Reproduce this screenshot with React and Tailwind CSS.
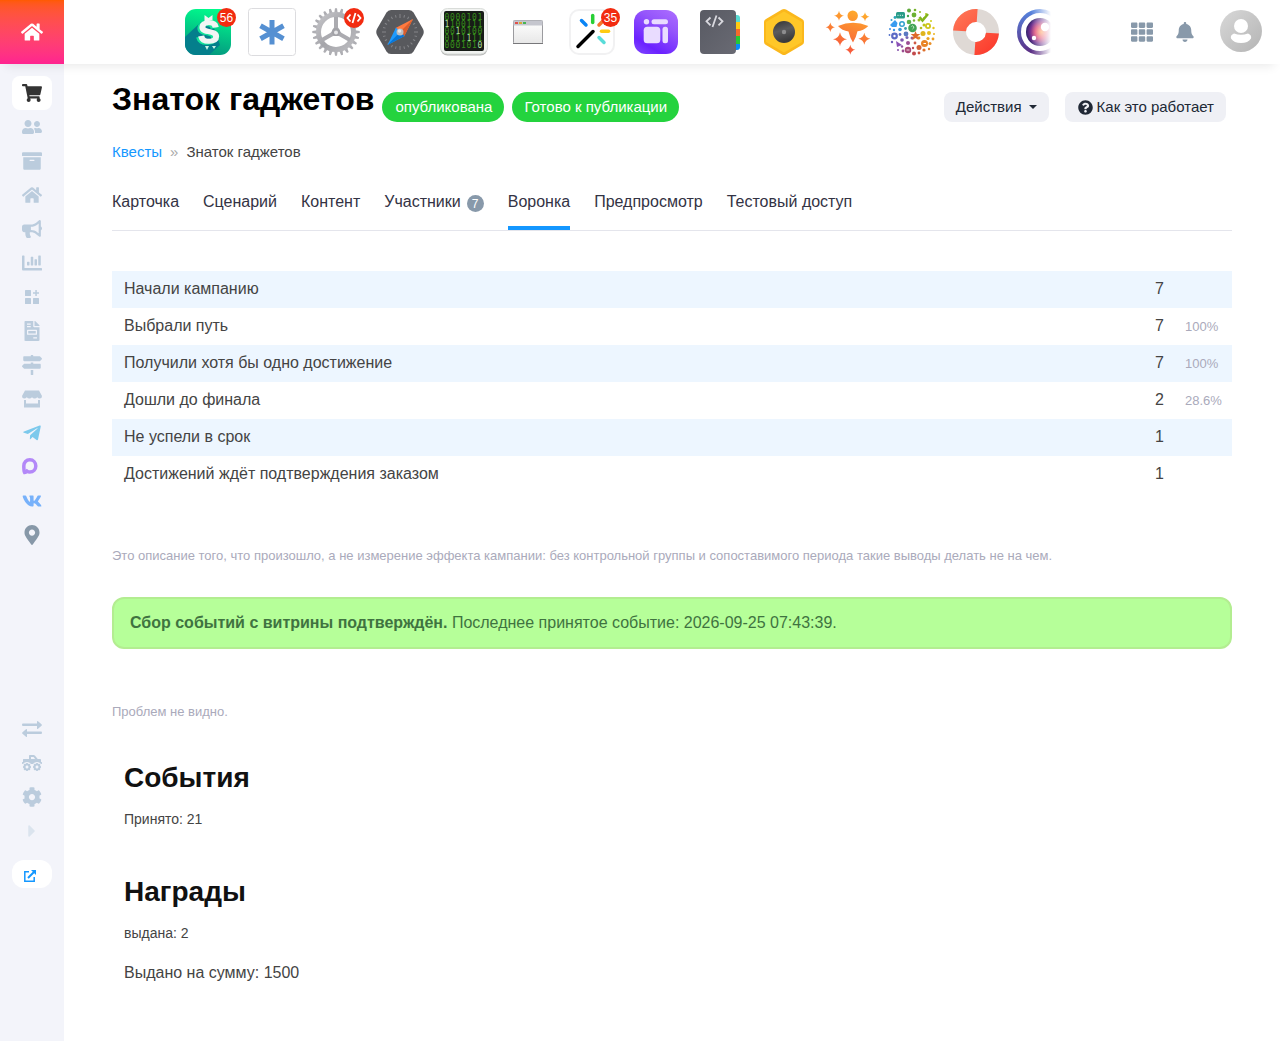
import {
  FaArchive,
  FaBell,
  FaBullhorn,
  FaCaretRight,
  FaChartBar,
  FaCog,
  FaFileInvoice,
  FaHome,
  FaMapMarkerAlt,
  FaMapSigns,
  FaQuestionCircle,
  FaShoppingCart,
  FaTelegramPlane,
  FaTh,
  FaTruckMonster,
  FaUserFriends,
  FaVk,
} from "react-icons/fa";

const FUNNEL = [
  { label: "Начали кампанию", value: 7, percent: "" },
  { label: "Выбрали путь", value: 7, percent: "100%" },
  { label: "Получили хотя бы одно достижение", value: 7, percent: "100%" },
  { label: "Дошли до финала", value: 2, percent: "28.6%" },
  { label: "Не успели в срок", value: 1, percent: "" },
  { label: "Достижений ждёт подтверждения заказом", value: 1, percent: "" },
];

const TABS = [
  { label: "Карточка" },
  { label: "Сценарий" },
  { label: "Контент" },
  { label: "Участники", count: 7 },
  { label: "Воронка", active: true },
  { label: "Предпросмотр" },
  { label: "Тестовый доступ" },
];

/* ---------- app icons, 48x48 ---------- */

function MoneyIcon() {
  return (
    <svg viewBox="0 0 48 48" className="size-12">
      <defs>
        <linearGradient id="money" x1="0.8" y1="0" x2="0.6" y2="1">
          <stop offset="0" stopColor="#00ff8c" />
          <stop offset="1" stopColor="#049a80" />
        </linearGradient>
        <clipPath id="moneyClip"><rect x="1" y="1" width="46" height="46" rx="11" /></clipPath>
      </defs>
      <g clipPath="url(#moneyClip)">
        <rect x="1" y="1" width="46" height="46" fill="url(#money)" />
        <path d="M17 14 1 29V47H25L36 37 30 20Z" fill="#047f8c" />
        <text
          x="25"
          y="35"
          fill="#f2f5f4"
          stroke="#f2f5f4"
          strokeWidth="1.500"
          fontFamily="Liberation Sans, sans-serif"
          fontWeight="700"
          fontSize="32"
          textAnchor="middle"
          className="drop-shadow-[-2px_1px_0_#14e59a]"
        >
          S
        </text>
        <path d="M20.500 14V7l4 3 4-3v5" fill="#f2f5f4" />
        <path d="M21 38h4l-2 4ZM28 38h4l-2 3Z" fill="#c9f5e6" />
      </g>
    </svg>
  );
}

function AsteriskIcon() {
  return (
    <svg viewBox="0 0 48 48" className="size-12">
      <rect x="0.5" y="0.5" width="47" height="47" rx="3" fill="#fff" stroke="#dcdcdf" />
      <path d="M24 12v24.500M12.500 17.700l23 13M35.500 17.700l-23 13" stroke="#5590d2" strokeWidth="5" />
    </svg>
  );
}

function GearIcon() {
  const teeth = Array.from({ length: 24 }, (_, i) => i * 15);
  return (
    <svg viewBox="0 0 48 48" className="size-12">
      <defs>
        <linearGradient id="gear" x1="0" y1="0" x2="1" y2="1">
          <stop offset="0" stopColor="#c4c4c8" />
          <stop offset="0.5" stopColor="#a5a5aa" />
          <stop offset="1" stopColor="#bcbcc0" />
        </linearGradient>
      </defs>
      {teeth.map((a) => (
        <path key={a} d="M22.300 5 23 0.300h2L25.700 5Z" fill="#aeaeb3" transform={`rotate(${a} 24 24)`} />
      ))}
      <circle cx="24" cy="24" r="17.500" fill="none" stroke="url(#gear)" strokeWidth="5" />
      <path d="M24 24V9M24 24 10 32M24 24l14 8" stroke="#ababb0" strokeWidth="4" />
      <path d="M24 16l7 12H17Z" fill="#ababb0" />
      <circle cx="24" cy="24" r="4" fill="#a2a2a7" />
      <circle cx="24" cy="24.500" r="2" fill="#e6e6e8" />
    </svg>
  );
}

function CompassIcon() {
  const ticks = Array.from({ length: 24 }, (_, i) => i * 15);
  return (
    <svg viewBox="0 0 48 48" className="size-12">
      <path d="M15 2h18q3 0 4.500 2.500L47 21q1.500 3 0 6L37.500 43.500Q36 46 33 46H15q-3 0-4.500-2.500L1 27q-1.500-3 0-6L10.500 4.500Q12 2 15 2Z" fill="#58595d" />
      {ticks.map((a) => (
        <path
          key={a}
          d={a % 90 === 0 ? "M24 6v4" : "M24 6.500v2.500"}
          stroke="#85868a"
          strokeWidth="1"
          transform={`rotate(${a} 24 24)`}
        />
      ))}
      <path d="M37 11 19.500 20l8.500 8.500Z" fill="#ff793e" />
      <path d="M37 11 24 24l4 4.500Z" fill="#d95d2c" />
      <path d="M11.500 37 20 19.500l8.500 8.500Z" fill="#1e9bff" />
      <path d="M11.500 37 24 24l4.500 4Z" fill="#0876d8" />
      <circle cx="24" cy="24" r="3.500" fill="#bdbdc0" />
      <circle cx="23.500" cy="23" r="1.800" fill="#e4e4e4" />
    </svg>
  );
}

function MatrixIcon() {
  const rows = ["0000101", "1100111", "0010100", "0111111", "0001010"];
  return (
    <svg viewBox="0 0 48 48" className="size-12">
      <rect x="0.500" y="1" width="47" height="46.500" rx="7" fill="#b7b8b7" />
      <rect x="0.500" y="0.500" width="47" height="45.500" rx="7" fill="#f1f3f1" stroke="#d9dcd9" />
      <rect x="4" y="3" width="40" height="40" rx="2" fill="#171c17" />
      <g fontFamily="DejaVu Sans Mono, monospace" fontSize="8">
        {rows.map((row, r) =>
          row.split("").map((digit, c) => (
            <text
              key={`${r}-${c}`}
              x={4.5 + c * 5.5}
              y={11.5 + r * 7}
              fill={(r * 5 + c * 3) % 11 === 5 ? "#a9dc9b" : "#37901a"}
            >
              {digit}
            </text>
          ))
        )}
      </g>
    </svg>
  );
}

function WindowIcon() {
  return (
    <svg viewBox="0 0 48 48" className="size-12">
      <defs>
        <linearGradient id="win" x1="0" y1="0" x2="0" y2="1">
          <stop offset="0" stopColor="#fff" />
          <stop offset="1" stopColor="#e7e7e7" />
        </linearGradient>
      </defs>
      <rect x="9.500" y="12.500" width="29" height="23" rx="1" fill="url(#win)" stroke="#9b9b9f" />
      <path d="M9.500 12.500h29v5h-29Z" fill="#c5c6ce" />
      <path d="M9 35.500h30" stroke="#77777a" />
      <rect x="11" y="14" width="3" height="2" fill="#df514b" />
      <rect x="15" y="14" width="3" height="2" fill="#d5ab35" />
      <rect x="19" y="14" width="3" height="2" fill="#45b554" />
    </svg>
  );
}

function WandIcon() {
  return (
    <svg viewBox="0 0 48 48" className="size-12" fill="none" strokeLinecap="round" strokeWidth="3.500">
      <rect x="2" y="2" width="44" height="44" rx="9" fill="#fff" stroke="#f1f1f2" strokeWidth="2" />
      <path d="M10 38.500 25 23.500" stroke="#000" />
      <path d="M13.500 12.500l4.500 4.500" stroke="#0a84f5" />
      <path d="M24.700 7.500v7" stroke="#27cf35" />
      <path d="M31 17l6-6" stroke="#f4742c" />
      <path d="M33.500 23.300h7" stroke="#ffcb12" />
      <path d="M31 29.500l5 5" stroke="#59dcd9" />
    </svg>
  );
}

function LayoutIcon() {
  return (
    <svg viewBox="0 0 48 48" className="size-12">
      <defs>
        <linearGradient id="lay" x1="0.900" y1="0" x2="0.300" y2="1">
          <stop offset="0" stopColor="#ab6cff" />
          <stop offset="0.350" stopColor="#9556fb" />
          <stop offset="0.850" stopColor="#6b22ff" />
          <stop offset="1" stopColor="#7738ff" />
        </linearGradient>
      </defs>
      <rect x="2" y="2" width="44" height="44" rx="12" fill="url(#lay)" />
      <g fill="#e9dcff">
        <circle cx="14.500" cy="13.700" r="2.700" />
        <rect x="19.500" y="11.300" width="16.500" height="5" rx="2.500" />
        <rect x="11.700" y="18.700" width="16.600" height="16.500" rx="3.500" />
        <rect x="30.500" y="18.700" width="5.500" height="16.500" rx="2.500" />
      </g>
    </svg>
  );
}

function NotebookIcon() {
  return (
    <svg viewBox="0 0 48 48" className="size-12">
      <defs>
        <linearGradient id="note" x1="0" y1="0" x2="1" y2="1">
          <stop offset="0" stopColor="#585a63" />
          <stop offset="1" stopColor="#696a73" />
        </linearGradient>
      </defs>
      <rect x="36" y="7" width="8" height="10" rx="3" fill="#57dad2" />
      <rect x="36" y="33" width="8" height="9" rx="3" fill="#078cf8" />
      <path d="M38 14h6v8h-6Z" fill="#ffcc12" />
      <path d="M38 21h6v8h-6Z" fill="#f46b2b" />
      <path d="M38 28h6v8h-6Z" fill="#25ca35" />
      <rect x="4" y="2" width="36" height="44" rx="4" fill="url(#note)" />
      <path d="M14.500 9.500 10.500 13.300l4 4M22.500 9.500l4 3.800-4 4M20.500 7.500l-4 11.500" fill="none" stroke="#d9d9df" strokeWidth="1.800" />
    </svg>
  );
}

function HexagonIcon() {
  return (
    <svg viewBox="0 0 48 48" className="size-12">
      <defs>
        <linearGradient id="lens" x1="0" y1="0" x2="0.300" y2="1">
          <stop offset="0" stopColor="#333335" />
          <stop offset="0.500" stopColor="#5c5c5e" />
          <stop offset="1" stopColor="#3a3a3c" />
        </linearGradient>
      </defs>
      <path d="M22 1.500q2-1 4 0L42 11q2 1 2 3v20q0 2-2 3L26 46.500q-2 1-4 0L6 37q-2-1-2-3V14q0-2 2-3Z" fill="#fbb81c" />
      <path d="M24 3.500 42 14v20L24 44.500 6 34V14Z" fill="#ffc728" />
      <circle cx="24" cy="24" r="11" fill="url(#lens)" />
      <circle cx="24" cy="24" r="2.200" fill="#8d8d8f" />
    </svg>
  );
}

const STARS = [
  [15, 7.7, 5],
  [41, 8.7, 4.5],
  [6.3, 19.3, 4.7],
  [16, 31.3, 7],
  [40.3, 30.7, 6],
  [26.3, 41.7, 5],
];

function PersonStarsIcon() {
  return (
    <svg viewBox="0 0 48 48" className="size-12">
      <defs>
        <linearGradient id="person" gradientUnits="userSpaceOnUse" x1="34" y1="2" x2="20" y2="46">
          <stop offset="0" stopColor="#ffad2b" />
          <stop offset="1" stopColor="#f6533d" />
        </linearGradient>
      </defs>
      <g fill="url(#person)">
        <circle cx="28.700" cy="7.800" r="5.200" />
        <path d="M14 18q15-6.500 30.300 0-5 5-10.800 5.300Q32 30 29 34.500 26 30 24.500 23.500 18 22.500 14 18Z" />
        {STARS.map(([x, y, r]) => (
          <path
            key={`${x}-${y}`}
            d={`M${x} ${y - r}Q${x + r * 0.15} ${y - r * 0.15} ${x + r} ${y}Q${x + r * 0.15} ${y + r * 0.15} ${x} ${y + r}Q${x - r * 0.15} ${y + r * 0.15} ${x - r} ${y}Q${x - r * 0.15} ${y - r * 0.15} ${x} ${y - r}Z`}
          />
        ))}
      </g>
    </svg>
  );
}

/* x, y, radius, colour */
const BUBBLES = [
  [21, 2.5, 2, "#5faa3c"], [27, 2, 1.3, "#78b32b"], [32, 4, 1, "#93bb22"], [26, 7, 2.4, "#6cb133"],
  [20, 8, 1.2, "#45a54f"], [31, 12, 1.5, "#98bd20"], [38, 6, 1, "#b5c51b"], [43, 13, 1, "#cfce18"],
  [21, 14, 2.3, "#5bb04c"], [26, 12.5, 1.2, "#77b733"], [36, 17, 1.5, "#bdc41b"], [40, 18, 3, "#cfc51b"],
  [45.5, 20, 1.2, "#e5c51a"], [33, 20, 1.3, "#b4be1e"], [46, 26, 1, "#ecb31d"], [41, 25, 2, "#e8bc1b"],
  [35, 25.5, 2.5, "#e0b41c"], [45, 31, 1.4, "#eda022"], [40, 30.500, 1.6, "#eaa321"], [42, 35.5, 1.5, "#e98f26"],
  [31, 30, 1.4, "#e08a2a"], [41, 41, 1.2, "#e17b2b"], [36, 42, 1.6, "#dd6f2c"], [31, 39.500, 2.5, "#d35f35"],
  [27, 35, 1.4, "#cf5a45"], [31, 45, 1.4, "#cb4f3c"], [26, 45.500, 2, "#c24a4c"], [25, 40, 1.2, "#bd4b5a"],
  [15, 43, 1.4, "#9a4b90"], [20, 35, 2, "#9a4d95"], [14, 38.500, 1.2, "#8e50a0"], [10, 42, 1, "#8450ab"],
  [14, 32, 1.8, "#7f56b0"], [4, 34, 1.2, "#6c5cbb"], [6.500, 28, 3.4, "#5b6bc5"], [1.500, 27, 0.900, "#5270c9"],
  [12, 26.500, 1.4, "#5c6fc4"], [18, 26, 2.4, "#5a79c2"], [2, 21, 1, "#3e8ee2"], [6, 22, 1.2, "#3e93e4"],
  [12, 21.500, 1.8, "#3a96d8"], [14, 16, 3, "#31a0ce"], [17.500, 20.500, 1.4, "#3a9cab"], [3.500, 12, 1, "#33a0cd"],
  [7, 9.500, 1.400, "#2ca6b8"], [19, 29.500, 1.500, "#7766b4"], [24, 30, 1.500, "#9d5a8c"], [36, 10, 0.900, "#9fc01f"],
];

function CommunityIcon() {
  return (
    <svg viewBox="0 0 48 48" className="size-12">
      {BUBBLES.map(([x, y, r, color]) => (
        <circle key={`${x}-${y}`} cx={x} cy={y} r={r} fill={color} />
      ))}
      <circle cx="14" cy="16" r="1.500" fill="#fff" />
      <circle cx="6.500" cy="28" r="1.200" fill="#fff" />
      <circle cx="40" cy="18" r="1.200" fill="#fff" />
      <circle cx="24.500" cy="20" r="4.300" fill="#42a456" />
      <path d="M23.500 18.500q1-1.500 2 0t-1 2.500" fill="none" stroke="#c9e8cb" />
      <path d="M31.500 9l3 3.500L40 6" fill="none" stroke="#82b51c" strokeWidth="2.500" />
      <rect x="8" y="4" width="9" height="6.500" rx="1.500" fill="#289b87" />
      <path d="M9.500 7.300h6" stroke="#fff" strokeDasharray="1 1.300" />
      <path d="M2 17l5-5 2.500 3-1 4H4Z" fill="#399cf0" />
      <circle cx="36.500" cy="35.500" r="3.500" fill="#e98325" />
      <path d="M35.500 35.500h2.500" stroke="#fff" />
      <circle cx="20" cy="42" r="3.200" fill="#a74977" />
      <path d="M18.500 42h3" stroke="#fff" strokeWidth="0.800" />
      <path d="M8 33l6 4-5 2Z" fill="#8950b5" />
      <path d="M27.500 23l1.300 3h3.500l-2.700 2.300 1 3.700-3.100-2-3.100 2 1-3.700-2.700-2.300h3.500Z" fill="#df6a2a" />
    </svg>
  );
}

function LifebuoyIcon() {
  return (
    <svg viewBox="0 0 48 48" className="size-12">
      <defs>
        <linearGradient id="buoy" x1="0" y1="0" x2="1" y2="1">
          <stop offset="0" stopColor="#ff7b59" />
          <stop offset="1" stopColor="#fb3428" />
        </linearGradient>
      </defs>
      <g transform="rotate(4 24 24)">
        <circle cx="24" cy="24" r="16.500" fill="none" stroke="#dfd9d5" strokeWidth="13" />
        <path d="M1 24A23 23 0 0 1 24 1V14A10 10 0 0 0 14 24ZM47 24A23 23 0 0 1 24 47V34A10 10 0 0 0 34 24Z" fill="url(#buoy)" />
      </g>
    </svg>
  );
}

function EyeIcon() {
  return (
    <svg viewBox="0 0 48 48" className="size-12">
      <defs>
        <linearGradient id="eyeRing" x1="0" y1="0" x2="0" y2="1">
          <stop offset="0" stopColor="#5684de" />
          <stop offset="1" stopColor="#5b2e83" />
        </linearGradient>
        <radialGradient id="eye" cx="0.550" cy="0.500" r="0.550">
          <stop offset="0" stopColor="#ffa15b" />
          <stop offset="0.400" stopColor="#e14c75" />
          <stop offset="0.750" stopColor="#713090" />
          <stop offset="1" stopColor="#31246d" />
        </radialGradient>
      </defs>
      <circle cx="24" cy="24" r="21" fill="none" stroke="url(#eyeRing)" strokeWidth="4" />
      <circle cx="24" cy="24" r="14" fill="url(#eye)" />
      <circle cx="29" cy="19" r="4.200" fill="#fff" />
      <circle cx="18" cy="30" r="2.200" fill="#fff" />
    </svg>
  );
}

const APPS = [
  { name: "Продажи", Icon: MoneyIcon, badge: "56" },
  { name: "Задачи", Icon: AsteriskIcon },
  { name: "Настройки", Icon: GearIcon, code: true },
  { name: "Навигатор", Icon: CompassIcon },
  { name: "Данные", Icon: MatrixIcon },
  { name: "Окно", Icon: WindowIcon },
  { name: "Мастер", Icon: WandIcon, badge: "35" },
  { name: "Макеты", Icon: LayoutIcon },
  { name: "Код", Icon: NotebookIcon },
  { name: "Камера", Icon: HexagonIcon },
  { name: "Команда", Icon: PersonStarsIcon },
  { name: "Сообщество", Icon: CommunityIcon },
  { name: "Помощь", Icon: LifebuoyIcon },
  { name: "Обзор", Icon: EyeIcon },
];

/* ---------- sidebar icons ---------- */

function GridPlusIcon() {
  return (
    <svg viewBox="0 0 20 20" className="size-5" fill="currentColor">
      <rect x="3" y="3" width="6" height="6" rx="0.500" />
      <rect x="3" y="11" width="6" height="6" rx="0.500" />
      <rect x="11" y="11" width="6" height="6" rx="0.500" />
      <path d="M13.300 3h1.500v2.300H17v1.500h-2.200V9h-1.500V6.800H11V5.300h2.300Z" />
    </svg>
  );
}

function StallIcon() {
  return (
    <svg viewBox="0 0 20 20" className="size-5" fill="currentColor">
      <path d="M3 1.500h14L20 7q0 2.500-2.200 2.500-1.500 0-2.600-1.200-1 1.200-2.600 1.200T10 8.300Q9 9.500 7.400 9.500T4.800 8.300Q3.700 9.500 2.200 9.500 0 9.500 0 7Z" />
      <path d="M2 11h2v3.500h12V11h2v7.500H2Z" />
    </svg>
  );
}

function MaxIcon() {
  return (
    <svg viewBox="0 0 20 20" className="size-5">
      <path
        d="M1.800 9C1.800 5 4.300 2.800 7.800 2.800s6 2.700 6 6.200-2.500 6-6 6c-1.200 0-2-.3-2.800-.9-.7.900-1.500 1.400-2.400 1.400C1.800 14 1.800 11.500 1.800 9Z"
        fill="none"
        stroke="#b388f8"
        strokeWidth="3.500"
      />
    </svg>
  );
}

function ExchangeIcon() {
  return (
    <svg viewBox="0 0 20 20" className="size-5" fill="currentColor">
      <path d="M1 4.500h14V2.800q0-1.300 1-.6l3.500 3q.8.800 0 1.600l-3.500 3q-1 .7-1-.6V7H1Q0 7 0 5.800T1 4.500Z" />
      <path d="M19 12.500H5v-1.700q0-1.300-1-.6l-3.500 3q-.8.800 0 1.600l3.500 3q1 .7 1-.6V15h14q1 0 1-1.200t-1-1.300Z" />
    </svg>
  );
}

function ExternalIcon() {
  return (
    <svg viewBox="0 0 12 12" className="size-3" fill="none" stroke="#1497ff" strokeWidth="1.500">
      <path d="M5 1.800H.8v9.400h9.400V7" />
      <path d="M4 8l6-6" strokeWidth="2" />
      <path d="M7 0h5v5Z" fill="#1497ff" stroke="none" />
    </svg>
  );
}

const SIDE_TOP = [
  { name: "Магазин", icon: <FaShoppingCart size={20} className="text-[#333]" />, active: true },
  { name: "Клиенты", icon: <FaUserFriends size={20} /> },
  { name: "Архив", icon: <FaArchive size={20} /> },
  { name: "Дом", icon: <FaHome size={20} /> },
  { name: "Реклама", icon: <FaBullhorn size={20} /> },
  { name: "Отчёты", icon: <FaChartBar size={20} /> },
  { name: "Модули", icon: <GridPlusIcon /> },
  { name: "Документы", icon: <FaFileInvoice size={20} /> },
  { name: "Маршруты", icon: <FaMapSigns size={20} /> },
  { name: "Витрина", icon: <StallIcon /> },
  { name: "Telegram", icon: <FaTelegramPlane size={20} className="text-[#7cc9ec]" /> },
  { name: "MAX", icon: <MaxIcon /> },
  { name: "ВКонтакте", icon: <FaVk size={20} className="text-[#77b1fa]" /> },
  { name: "Адреса", icon: <FaMapMarkerAlt size={20} className="text-[#8798a8]" /> },
];

const SIDE_BOTTOM = [
  { name: "Обмен", icon: <ExchangeIcon /> },
  { name: "Доставка", icon: <FaTruckMonster size={20} /> },
  { name: "Параметры", icon: <FaCog size={20} /> },
  { name: "Развернуть", icon: <FaCaretRight size={20} className="text-[#dbe4ee]" /> },
];

function SideLink({ item }) {
  return (
    <a
      href="#"
      aria-label={item.name}
      className={
        item.active
          ? "flex h-[34px] w-10 items-center justify-center rounded-lg bg-white"
          : "flex h-[34px] w-10 items-center justify-center text-[#bbccdd]"
      }
    >
      {item.icon}
    </a>
  );
}

function Header() {
  return (
    <header className="relative z-10 flex h-16 items-center bg-white shadow-[0_8px_10px_-6px_rgba(0,0,0,0.09)]">
      <a
        href="#"
        aria-label="Главная"
        className="grid size-16 shrink-0 place-items-center bg-linear-to-b from-[#ff5a00] to-[#ff2390] text-white"
      >
        <FaHome size={22} />
      </a>

      <nav className="relative ml-28 flex h-16 min-w-0 flex-1 items-center overflow-hidden" aria-label="Приложения">
        <div className="flex">
          {APPS.map(({ name, Icon, badge, code }) => (
            <a key={name} href="#" aria-label={name} className="relative mx-2 block size-12 shrink-0">
              <Icon />
              {badge ? (
                <span className="absolute -right-1 top-0 grid size-[19px] place-items-center rounded-full bg-[#f22b10] text-xs leading-none text-white">
                  {badge}
                </span>
              ) : null}
              {code ? (
                <span className="absolute -right-1 top-0 grid size-5 place-items-center rounded-full bg-[#f22b10]">
                  <svg viewBox="0 0 16 12" className="h-3 w-4" fill="none" stroke="#fff" strokeWidth="1.800">
                    <path d="M4.500 2.500 1.500 6l3 3.500M11.500 2.500l3 3.500-3 3.500M9.500 1l-3 10" />
                  </svg>
                </span>
              ) : null}
            </a>
          ))}
        </div>
        <div className="absolute right-0 top-0 h-16 w-5 bg-linear-to-r from-transparent to-white" />
      </nav>

      <div className="ml-20 mr-[18px] flex shrink-0 items-center text-[#8899aa]">
        <button type="button" aria-label="Все приложения"><FaTh size={22} /></button>
        <button type="button" aria-label="Уведомления" className="ml-[22px]"><FaBell size={20} /></button>
        <button type="button" aria-label="Профиль" className="-mt-0.5 ml-[25px]">
          <svg viewBox="0 0 42 42" className="size-[42px]">
            <defs>
              <linearGradient id="avatar" x1="0" y1="0" x2="1" y2="1">
                <stop offset="0" stopColor="#d8d8d8" />
                <stop offset="1" stopColor="#b4b4b4" />
              </linearGradient>
            </defs>
            <circle cx="21" cy="21" r="21" fill="url(#avatar)" />
            <circle cx="21" cy="16" r="7" fill="#fff" />
            <path d="M14 23.500Q21 26 28 23.500 32 25 31 28.500 28 33 21 33T11 28.500Q10 25 14 23.500Z" fill="#fff" />
          </svg>
        </button>
      </div>
    </header>
  );
}

function Sidebar() {
  return (
    <aside className="flex w-16 shrink-0 flex-col items-center bg-[#f3f4fa] pt-3">
      {SIDE_TOP.map((item) => (
        <SideLink key={item.name} item={item} />
      ))}
      <div className="mt-40 flex flex-col items-center">
        {SIDE_BOTTOM.map((item) => (
          <SideLink key={item.name} item={item} />
        ))}
        <a
          href="#"
          aria-label="Открыть сайт"
          className="mt-3 flex h-7 w-10 items-center rounded-xl bg-white pl-3 pt-1"
        >
          <ExternalIcon />
        </a>
      </div>
    </aside>
  );
}

export default function App() {
  return (
    <div className="flex min-h-screen flex-col bg-white font-['Liberation_Sans',Arial,sans-serif] text-base text-[#444]">
      <Header />
      <div className="flex flex-1">
        <Sidebar />

        <main className="min-w-0 flex-1 px-12 pb-12 pt-4">
          <div className="flex items-start justify-between">
            <div className="flex items-start gap-2">
              <h1 className="text-[32px] font-bold leading-[38px] text-black">Знаток гаджетов</h1>
              <span className="mt-3 rounded-full bg-[#24d33e] pl-[13px] pr-3 text-[15px] leading-[30px] text-white">опубликована</span>
              <span className="mt-3 rounded-full bg-[#24d33e] px-3 text-[15px] leading-[30px] text-white">Готово к публикации</span>
            </div>
            <div className="mr-1.5 mt-3 flex gap-4 text-[15px] leading-[30px] text-[#212936]">
              <button type="button" className="flex items-center gap-[7px] rounded-lg bg-[#eff0f5] px-3">
                Действия
                <svg viewBox="0 0 8 4" className="h-1 w-2" fill="currentColor">
                  <path d="M0 0h8L4 4Z" />
                </svg>
              </button>
              <button type="button" className="flex items-center gap-1 rounded-lg bg-[#eff0f5] pl-[13px] pr-3">
                <FaQuestionCircle size={15} />
                Как это работает
              </button>
            </div>
          </div>

          <nav aria-label="Путь" className="mt-5 flex gap-2 text-[15px] leading-5">
            <a href="#" className="text-[#1497ff]">Квесты</a>
            <span className="text-[#aaa]">»</span>
            <span>Знаток гаджетов</span>
          </nav>

          <nav aria-label="Разделы" className="mt-7 flex gap-6 border-b border-[#e4e5ec] text-[#333344]">
            {TABS.map((tab) => (
              <a
                key={tab.label}
                href="#"
                className={
                  tab.active
                    ? "flex h-10 items-start border-b-4 border-[#1497ff] leading-6"
                    : "flex h-10 items-start leading-6"
                }
              >
                {tab.label}
                {tab.count ? (
                  <span className="ml-1.5 mt-[5px] grid size-[17px] place-items-center rounded-full bg-[#8899aa] text-xs leading-none text-white">
                    {tab.count}
                  </span>
                ) : null}
              </a>
            ))}
          </nav>

          <table className="mt-10 w-full">
            <tbody>
              {FUNNEL.map((row) => (
                <tr key={row.label} className="h-[37px] odd:bg-[#edf6ff]">
                  <td className="px-3 pb-0.5">{row.label}</td>
                  <td className="w-10 pb-0.5 pr-2.5 text-right">{row.value}</td>
                  <td className="w-[58px] pl-[11px] text-[13px] text-[#aaaabb]">{row.percent}</td>
                </tr>
              ))}
            </tbody>
          </table>

          <p className="mt-[53px] text-[13px] leading-5 text-[#aaaabb]">
            Это описание того, что произошло, а не измерение эффекта кампании: без контрольной группы и
            сопоставимого периода такие выводы делать не на чем.
          </p>

          <div className="mt-[31px] rounded-xl border-2 border-[#b3ed91] bg-[#b6ff99] px-4 py-3 text-[#3f7340]">
            <strong>Сбор событий с витрины подтверждён.</strong> Последнее принятое событие: 2026-09-25 07:43:39.
          </div>

          <p className="mt-[53px] text-[13px] leading-5 text-[#aaaabb]">Проблем не видно.</p>

          <section className="mt-10 px-3">
            <h2 className="text-[28px] font-bold leading-8 text-[#111]">События</h2>
            <p className="mt-[15px] text-sm">Принято: 21</p>
          </section>

          <section className="mt-[47px] px-3">
            <h2 className="text-[28px] font-bold leading-8 text-[#111]">Награды</h2>
            <p className="mt-[15px] text-sm">выдана: 2</p>
            <p className="mt-[18px]">Выдано на сумму: 1500</p>
          </section>
        </main>
      </div>
    </div>
  );
}
